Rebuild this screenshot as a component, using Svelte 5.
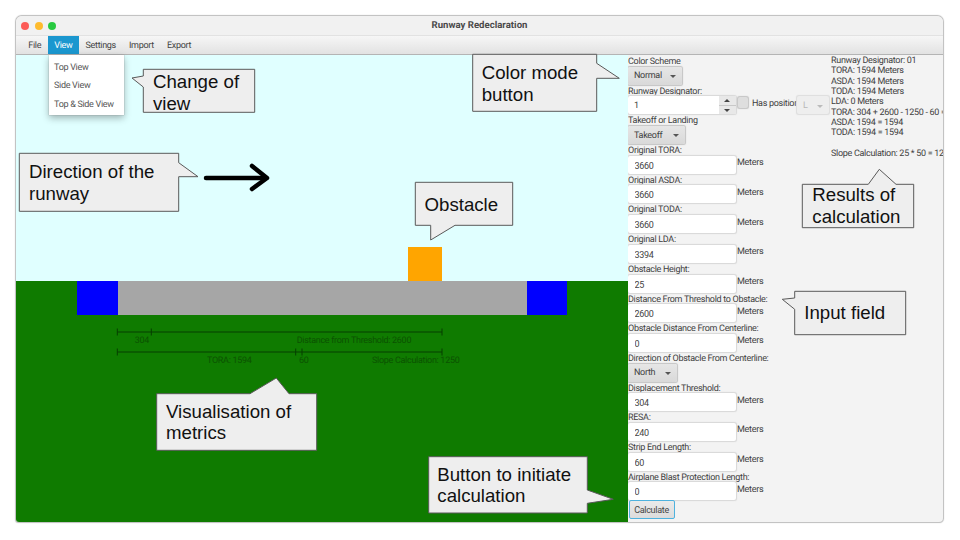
<script>
  const menus = ['File', 'View', 'Settings', 'Import', 'Export'];
  const viewItems = ['Top View', 'Side View', 'Top & Side View'];

  const fieldsTop = [
    { label: 'Original TORA:', value: '3660' },
    { label: 'Original ASDA:', value: '3660' },
    { label: 'Original TODA:', value: '3660' },
    { label: 'Original LDA:', value: '3394' },
    { label: 'Obstacle Height:', value: '25' },
    { label: 'Distance From Threshold to Obstacle:', value: '2600' },
    { label: 'Obstacle Distance From Centerline:', value: '0' }
  ];
  const fieldsBottom = [
    { label: 'Displacement Threshold:', value: '304' },
    { label: 'RESA:', value: '240' },
    { label: 'Strip End Length:', value: '60' },
    { label: 'Airplane Blast Protection Length:', value: '0' }
  ];

  const results = [
    'Runway Designator: 01',
    'TORA: 1594 Meters',
    'ASDA: 1594 Meters',
    'TODA: 1594 Meters',
    'LDA: 0 Meters',
    'TORA: 304 + 2600 - 1250 - 60 = 1594',
    'ASDA: 1594 = 1594',
    'TODA: 1594 = 1594',
    '\u00a0',
    'Slope Calculation: 25 * 50 = 1250'
  ];

  // coordinates below are relative to the canvas (window starts at 16,16 and the canvas at y 54.5)
  const metricLines = [
    { y: 277, ticks: [101.3, 135.3, 426] },
    { y: 297, ticks: [101.3, 279.7, 286, 426] }
  ];
  const metricLabels = [
    { x: 118.7, y: 288, text: '304' },
    { x: 280.7, y: 288, text: 'Distance from Threshold: 2600' },
    { x: 191, y: 308, text: 'TORA: 1594' },
    { x: 283, y: 308, text: '60' },
    { x: 356, y: 308, text: 'Slope Calculation: 1250' }
  ];

  // annotation callouts, in page coordinates
  const callouts = [
    {
      d: 'M143.3 69.3H254.7V112.3H143.3V87L132 78L143.3 76Z',
      x: 153, lines: [['Change of', 88], ['view', 109.5]]
    },
    {
      d: 'M19.3 153.3H178.7V162.7L198 176.7H178.7V211.3H19.3Z',
      x: 29, lines: [['Direction of the', 178], ['runway', 200]]
    },
    {
      d: 'M472.7 54.3H596.7V63.3L619.3 78.3H596.7V111.3H472.7Z',
      x: 481.7, lines: [['Color mode', 79], ['button', 100.7]]
    },
    {
      d: 'M415.3 182.3H512.7V225.3H455L430.7 240V225.3H415.3Z',
      x: 424.5, lines: [['Obstacle', 210.7]]
    },
    {
      d: 'M802.3 184.3H868.3L879.3 169.3L896 184.3H913.7V227.7H802.3Z',
      x: 812.3, lines: [['Results of', 201], ['calculation', 223.3]]
    },
    {
      d: 'M794.7 291.3H905.7V334.7H794.7V309.3L782.3 299.3L794.7 298Z',
      x: 804.3, lines: [['Input field', 319.3]]
    },
    {
      d: 'M156.7 393.7H250L276.3 378L289 393.7H316.7V450.3H156.7Z',
      x: 166, lines: [['Visualisation of', 417.7], ['metrics', 439.3]]
    },
    {
      d: 'M428.7 456.7H587.3V490L613.3 499.3L587.3 503.3V513H428.7Z',
      x: 437.3, lines: [['Button to initiate', 480.7], ['calculation', 502.3]]
    }
  ];
</script>

<div class="page">
  <div class="window">
    <header class="titlebar">
      <div class="lights">
        <span class="light red"></span>
        <span class="light yellow"></span>
        <span class="light green"></span>
      </div>
      <span class="title">Runway Redeclaration</span>
    </header>

    <nav class="menubar">
      {#each menus as menu}
        <span class="menu" class:active={menu === 'View'}>{menu}</span>
      {/each}
      <div class="dropdown">
        {#each viewItems as item}
          <div class="dropdown-item">{item}</div>
        {/each}
      </div>
    </nav>

    <main class="content">
      <section class="canvas">
        <div class="sky">
          <div class="obstacle"></div>
        </div>
        <div class="ground">
          <div class="runway">
            <div class="threshold"></div>
            <div class="strip"></div>
            <div class="threshold"></div>
          </div>
        </div>
        <svg class="metrics" width="612" height="468">
          {#each metricLines as line}
            <line x1={line.ticks[0]} x2={line.ticks[line.ticks.length - 1]} y1={line.y} y2={line.y} />
            {#each line.ticks as t}
              <line x1={t} x2={t} y1={line.y - 3.5} y2={line.y + 3.5} />
            {/each}
          {/each}
          {#each metricLabels as label}
            <text x={label.x} y={label.y}>{label.text}</text>
          {/each}
        </svg>
      </section>

      <aside class="panel">
        <div class="form">
          <div class="label">Color Scheme</div>
          <div class="select" style="width: 54px">Normal<i class="caret"></i></div>

          <div class="label">Runway Designator:</div>
          <div class="row">
            <div class="spinner">
              <span class="spinner-value">1</span>
              <div class="spinner-buttons">
                <span class="up"></span>
                <span class="down"></span>
              </div>
            </div>
            <span class="checkbox"></span>
            <span class="has-position">Has position</span>
            <div class="select disabled">L<i class="caret"></i></div>
          </div>

          <div class="label">Takeoff or Landing</div>
          <div class="select" style="width: 57px">Takeoff<i class="caret"></i></div>

          {#each fieldsTop as field}
            <div class="label">{field.label}</div>
            <div class="row">
              <input class="input" type="text" value={field.value} />
              <span class="unit">Meters</span>
            </div>
          {/each}

          <div class="label">Direction of Obstacle From Centerline:</div>
          <div class="select" style="width: 49px">North<i class="caret"></i></div>

          {#each fieldsBottom as field}
            <div class="label">{field.label}</div>
            <div class="row">
              <input class="input" type="text" value={field.value} />
              <span class="unit">Meters</span>
            </div>
          {/each}

          <button class="calculate">Calculate</button>
        </div>

        <div class="results">
          {#each results as line}
            <div>{line}</div>
          {/each}
        </div>
      </aside>
    </main>
  </div>

  <svg class="annotations" width="960" height="540">
    <g class="arrow">
      <path d="M206 178H266" />
      <path d="M252 166L267 178L252 189" />
    </g>
    {#each callouts as c}
      <path class="callout" d={c.d} />
      {#each c.lines as [text, y]}
        <text x={c.x} {y}>{text}</text>
      {/each}
    {/each}
  </svg>
</div>

<style>
  :global(body) {
    margin: 0;
    background: #fff;
  }

  .page {
    position: relative;
    width: 960px;
    height: 540px;
    padding: 16px 17px 18px 16px;
    box-sizing: border-box;
    overflow: hidden;
    font-family: Roboto, 'Noto Sans', sans-serif;
    font-size: 9px;
    letter-spacing: -0.3px;
    text-rendering: geometricPrecision;
  }

  .window {
    display: flex;
    flex-direction: column;
    height: 100%;
    border-radius: 6px 6px 4px 3px;
    overflow: hidden;
    background: #f3f3f3;
    box-shadow: 0 0 1px 0.5px #bdbdbd;
  }

  .titlebar {
    position: relative;
    display: flex;
    flex: 0 0 18.5px;
    align-items: center;
    justify-content: center;
    background: #f1f1f1;
    border-bottom: 1px solid #e2e2e2;
  }

  .lights {
    position: absolute;
    left: 5px;
    top: 6px;
    display: flex;
    gap: 5.4px;
  }

  .light {
    width: 8.2px;
    height: 8.2px;
    border-radius: 50%;
  }

  .red { background: #fc5b57; }
  .yellow { background: #febb2e; }
  .green { background: #28c940; }

  .title {
    font-size: 9.6px;
    font-weight: 700;
    letter-spacing: 0;
    color: #4a4a4a;
  }

  .menubar {
    position: relative;
    display: flex;
    flex: 0 0 18px;
    padding-left: 5.8px;
    background: linear-gradient(#f6f6f6, #e2e2e2);
    border-bottom: 1px solid #b4b4b4;
    color: #444;
  }

  .menu {
    display: flex;
    align-items: center;
    padding: 2.5px 6.5px 0;
  }

  .menu.active {
    background: #1b97cf;
    color: #fff;
  }

  .dropdown {
    position: absolute;
    left: 32.5px;
    top: 19px;
    z-index: 2;
    width: 75.5px;
    padding: 4.5px 0 1.5px;
    background: #fff;
    box-shadow: 0 0 1px #888, 0 3px 7px rgba(0, 0, 0, 0.3);
  }

  .dropdown-item {
    height: 18.3px;
    line-height: 18.3px;
    padding-left: 5.5px;
    color: #555;
    white-space: nowrap;
  }

  .content {
    display: flex;
    flex: 1;
    min-height: 0;
  }

  .canvas {
    position: relative;
    display: flex;
    flex: 0 0 612px;
    flex-direction: column;
  }

  .sky {
    display: flex;
    flex: 0 0 226.5px;
    align-items: flex-end;
    padding-left: 392px;
    box-sizing: border-box;
    background: #e0ffff;
  }

  .obstacle {
    width: 34px;
    height: 34px;
    background: #ffa500;
  }

  .ground {
    flex: 1;
    padding-left: 61px;
    background: #0f7b00;
  }

  .runway {
    display: flex;
    width: 490px;
    height: 33.5px;
  }

  .threshold {
    flex: 0 0 40.5px;
    background: #0000ff;
  }

  .strip {
    flex: 1;
    background: #a6a6a6;
  }

  .metrics {
    position: absolute;
    left: 0;
    top: 0;
  }

  .metrics line {
    stroke: #063f00;
    stroke-width: 1;
  }

  .metrics text {
    fill: #0b5200;
  }

  .panel {
    display: flex;
    flex: 1;
    min-width: 0;
    overflow: hidden;
    color: #3f3f3f;
  }

  .form {
    display: flex;
    flex: 0 0 203px;
    flex-direction: column;
    align-items: flex-start;
    padding-top: 0.5px;
  }

  .label {
    height: 11.7px;
    line-height: 14px;
    white-space: nowrap;
  }

  .row {
    display: flex;
    align-items: center;
    height: 18px;
  }

  .input {
    width: 108px;
    height: 18px;
    padding: 2px 0 0 6.5px;
    box-sizing: border-box;
    border: 0;
    border-radius: 2px;
    background: #fff;
    box-shadow: 0 0 1px 0.5px #d8d8d8;
    font: inherit;
    letter-spacing: inherit;
    color: #444;
  }

  .unit {
    margin-left: 1px;
    padding-bottom: 3px;
  }

  .select {
    display: flex;
    align-items: center;
    justify-content: space-between;
    height: 18px;
    padding: 1.5px 6px 0;
    box-sizing: border-box;
    border-radius: 2px;
    background: linear-gradient(#e6e6e6, #d9d9d9);
    box-shadow: 0 0 1px 0.5px #c4c4c4;
  }

  .select.disabled {
    width: 32px;
    background: #eeeeee;
    box-shadow: 0 0 1px 0.5px #dddddd;
    color: #b8b8b8;
  }

  .caret {
    width: 0;
    height: 0;
    border-left: 3px solid transparent;
    border-right: 3px solid transparent;
    border-top: 3px solid #555;
  }

  .disabled .caret {
    border-top-color: #bbb;
  }

  .spinner {
    display: flex;
    width: 108px;
    height: 18px;
    border-radius: 2px;
    background: #fff;
    box-shadow: 0 0 1px 0.5px #d8d8d8;
  }

  .spinner-value {
    flex: 1;
    line-height: 20px;
    padding-left: 6px;
  }

  .spinner-buttons {
    display: flex;
    flex: 0 0 17.5px;
    flex-direction: column;
    gap: 1px;
    background: #c8c8c8;
  }

  .up,
  .down {
    display: flex;
    flex: 1;
    align-items: center;
    justify-content: center;
    background: #e8e8e8;
  }

  .up::after {
    content: '';
    border-left: 3px solid transparent;
    border-right: 3px solid transparent;
    border-bottom: 3px solid #444;
  }

  .down::after {
    content: '';
    border-left: 3px solid transparent;
    border-right: 3px solid transparent;
    border-top: 3px solid #444;
  }

  .checkbox {
    width: 10px;
    height: 11px;
    margin: 0 4px 6px 2px;
    border-radius: 2px;
    background: #dedede;
    box-shadow: 0 0 1px 0.5px #c4c4c4;
  }

  .has-position {
    width: 45px;
    padding-bottom: 3px;
    white-space: nowrap;
  }

  .calculate {
    width: 46px;
    height: 18.5px;
    margin: 0 0 0 0.5px;
    padding: 0;
    border: 1px solid #4eb2de;
    border-radius: 2px;
    background: linear-gradient(#eaeaea, #dcdcdc);
    font: inherit;
    letter-spacing: inherit;
    color: #444;
  }

  .results {
    flex: none;
    width: 112px;
    padding-top: 1.5px;
    line-height: 10.33px;
    white-space: nowrap;
    overflow: hidden;
  }

  .annotations {
    position: absolute;
    left: 0;
    top: 0;
    pointer-events: none;
  }

  .arrow path {
    fill: none;
    stroke: #000;
    stroke-width: 4.5px;
    stroke-linecap: round;
    stroke-linejoin: round;
  }

  .callout {
    fill: #eeeeee;
    stroke: #595959;
    stroke-width: 1;
  }

  .annotations text {
    fill: #111;
    font-family: 'Liberation Sans', Arial, sans-serif;
    font-size: 18.67px;
    letter-spacing: 0;
    text-rendering: auto;
  }
</style>
